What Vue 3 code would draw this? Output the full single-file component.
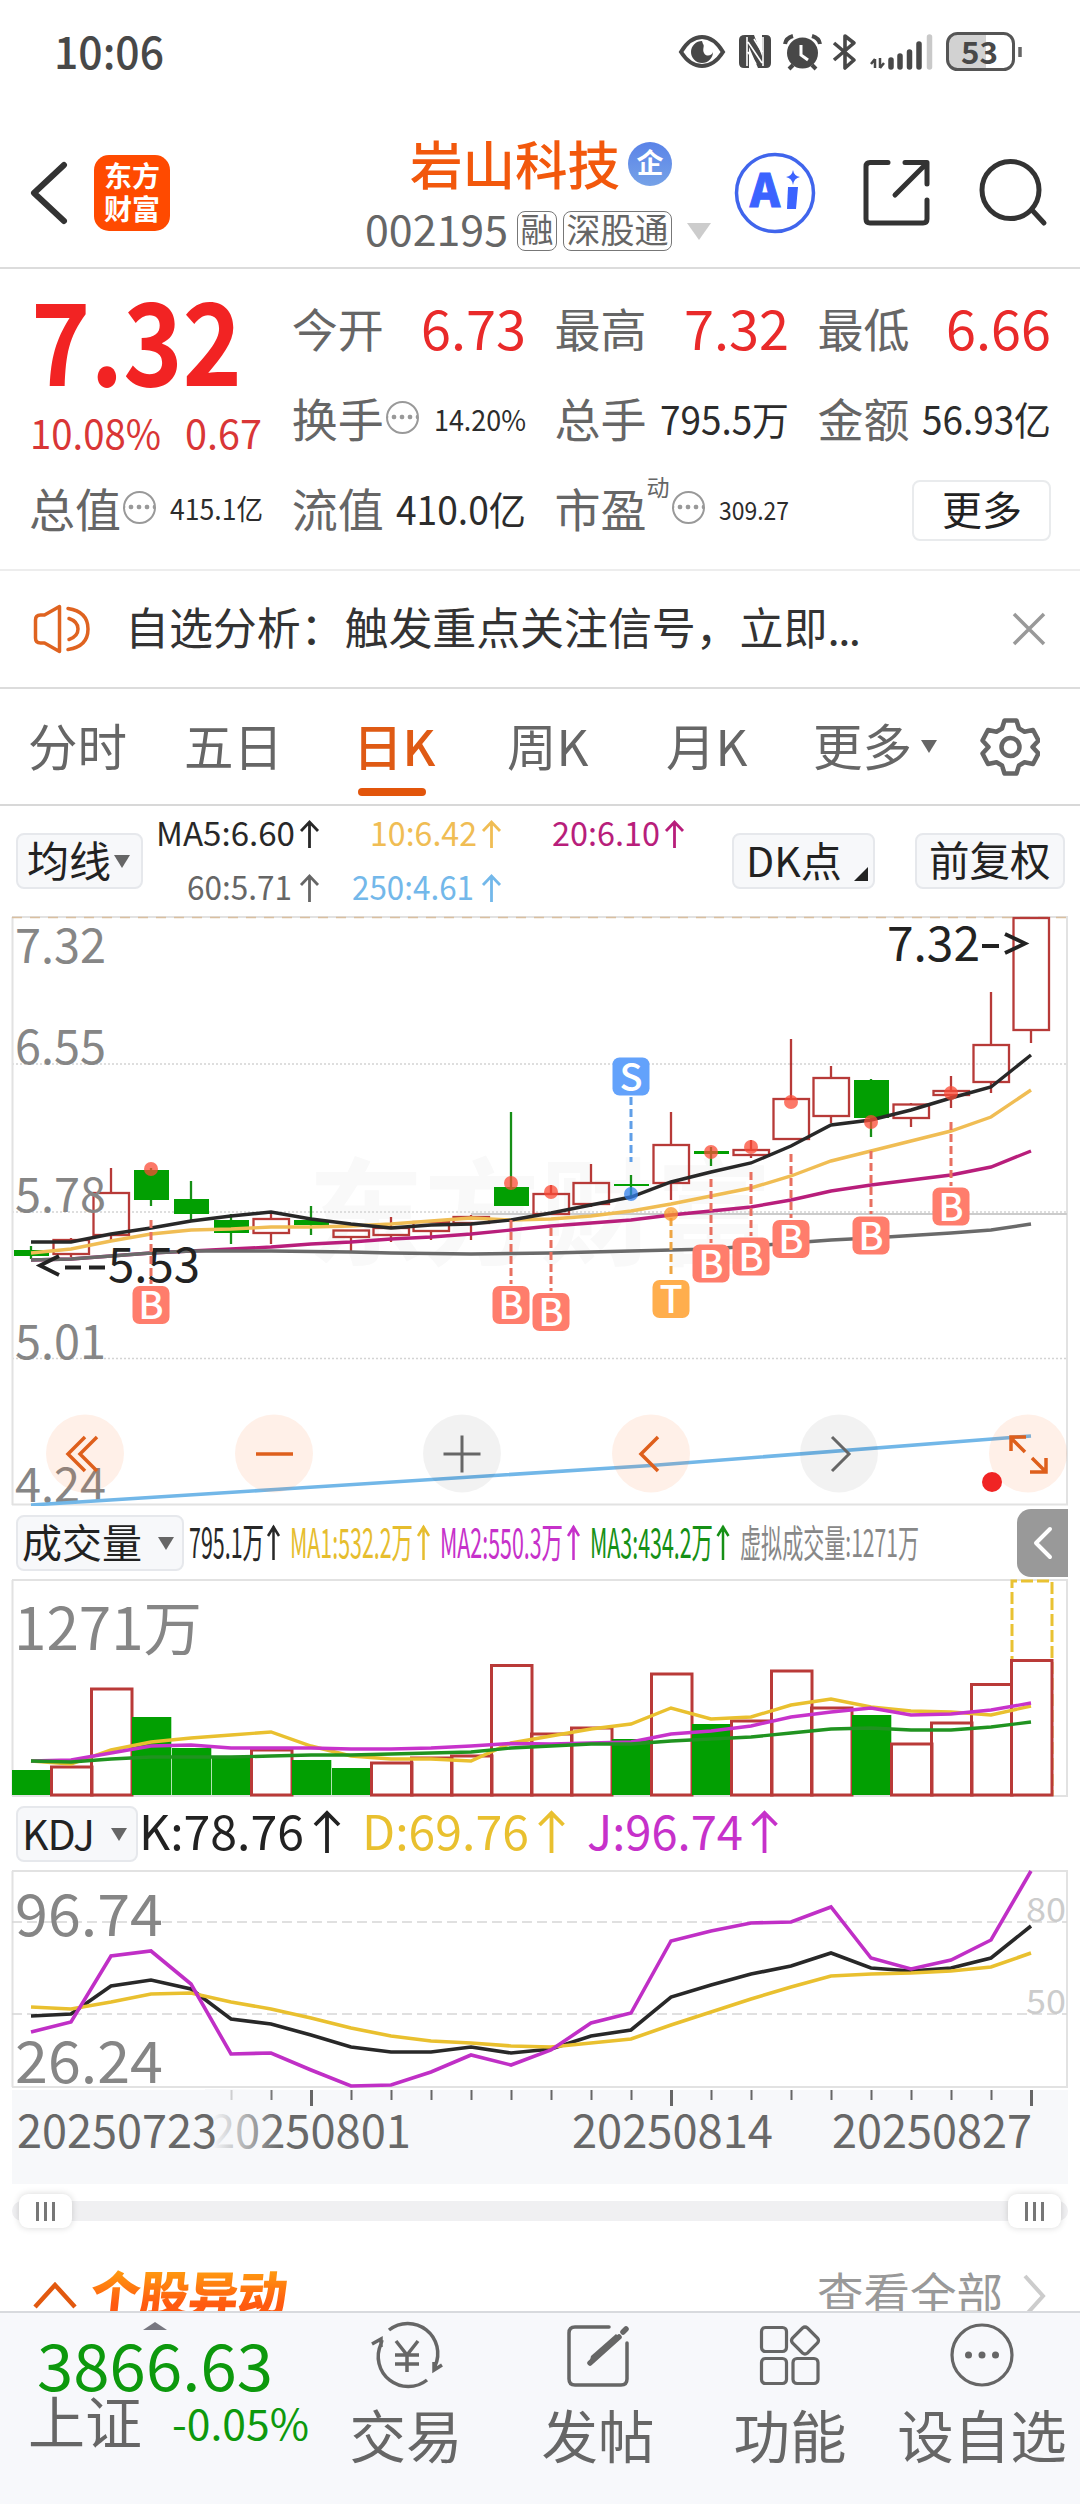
<script setup>
import { h } from 'vue'

// Single line of text set to an exact advance width, centred on its cap height
const Fit = ({ t, w, s }) =>
  h('svg', { width: w, height: s, style: { display: 'block', overflow: 'visible', flex: 'none' } }, [
    h('text', { x: 0, y: s * 0.8665, 'font-size': s, textLength: w, lengthAdjust: 'spacingAndGlyphs', fill: 'currentColor' }, t),
  ])
Fit.props = ['t', 'w', 's']

const px = (i) => 31 + 40 * i
const line = (ys) => ys.map((y, i) => `${px(i)},${y}`).join(' ')

// [rising, body top, body bottom, wick top, wick bottom]
const candles = [
  [0, 1250, 1256, 1246, 1259], [1, 1240, 1254, 1238, 1257], [1, 1193, 1235, 1168, 1240],
  [0, 1170, 1200, 1168, 1206], [0, 1199, 1214, 1181, 1222], [0, 1220, 1233, 1214, 1244],
  [1, 1219, 1233, 1213, 1244], [0, 1220, 1225, 1206, 1235], [1, 1230.5, 1237, 1230, 1251],
  [1, 1228, 1235, 1217, 1242], [1, 1222, 1231, 1221, 1240], [1, 1217, 1223, 1215, 1240],
  [0, 1187, 1206, 1112, 1206], [1, 1194, 1214, 1185, 1215], [1, 1183, 1204, 1164, 1207],
  [0, 1184, 1186, 1175, 1198], [1, 1145, 1183, 1112, 1200], [0, 1151, 1154, 1147, 1166],
  [1, 1150, 1155, 1140, 1158], [1, 1099, 1139, 1039, 1140], [1, 1078, 1116, 1066, 1123],
  [0, 1080, 1118, 1079, 1137], [1, 1104.5, 1118, 1103, 1127], [1, 1091, 1095, 1076, 1108],
  [1, 1045, 1082, 992, 1093], [1, 918, 1030, 918, 1043],
]
const averages = [
  { c: '#f0bd54', ys: [1253, 1249, 1241, 1234, 1230, 1229, 1227, 1227, 1226, 1224, 1221, 1218, 1220, 1219, 1216, 1211, 1204, 1196, 1188, 1176, 1161, 1151, 1141, 1131, 1117, 1090] },
  { c: '#b81e7b', ys: [1260, 1259, 1256, 1253, 1251, 1249, 1247, 1244, 1242, 1239, 1237, 1234, 1230, 1226, 1223, 1220, 1215, 1211, 1207, 1200, 1191, 1185, 1180, 1175, 1167, 1151] },
  { c: '#6a6a6a', ys: [1260, 1259, 1256, 1253, 1251, 1251, 1251, 1251.5, 1252, 1253, 1253.5, 1254, 1253.5, 1253, 1252, 1251, 1250, 1249, 1246, 1243, 1240, 1238, 1235.5, 1233, 1230, 1224] },
  { c: '#282828', ys: [1242, 1242, 1234, 1228, 1221, 1216, 1212, 1219, 1224, 1228, 1225, 1224, 1220, 1213, 1205, 1197, 1182, 1172, 1163, 1146, 1125, 1120, 1110, 1098, 1087, 1055] },
]
// [index, letter, dot y, dash start, dash end, badge centre]
const signals = [
  [3, 'B', 1169, 1220, 1284, 1305], [12, 'B', 1183, 1220, 1284, 1305], [13, 'B', 1192, 1228, 1291, 1312],
  [15, 'S', 1194, 1097, 1162, 1076.5], [16, 'T', 1214, 1218, 1278, 1299], [17, 'B', 1152, 1179, 1243, 1263.5],
  [18, 'B', 1147, 1172, 1236, 1256.5], [19, 'B', 1102, 1154, 1218, 1239], [21, 'B', 1122, 1151, 1214, 1235.5],
  [23, 'B', 1093, 1122, 1186, 1206.5],
]
const badge = { B: '#ff7d6c', S: '#63a2fb', T: '#ffae4d' }
const dotFill = { B: '#fb4b36', S: '#2f7eea', T: '#fb9a28' }
const dash = { B: '#e87060', S: '#609fe8', T: '#eea644' }
const prices = [['7.32', 963], ['6.55', 1064], ['5.78', 1212], ['5.01', 1359], ['4.24', 1502]]

const volumes = [
  [0, 1770], [1, 1767], [1, 1689], [0, 1717], [0, 1748], [0, 1756], [1, 1750], [0, 1760], [0, 1768],
  [1, 1763], [1, 1758], [1, 1756], [1, 1665.5], [1, 1734], [1, 1728], [0, 1739], [1, 1674], [0, 1724],
  [1, 1721], [1, 1671], [1, 1708], [0, 1715], [1, 1744], [1, 1723], [1, 1684.5], [1, 1660.5],
]
const volumeLines = [
  { c: '#e9c02f', ys: [1761, 1764, 1750, 1742, 1738, 1735, 1732, 1746, 1756, 1759, 1759, 1761, 1743, 1736, 1729, 1724, 1708, 1719, 1717, 1705, 1699, 1707, 1711, 1712, 1715, 1706] },
  { c: '#c733cb', ys: [1761, 1760, 1753, 1746, 1745, 1748, 1748, 1748, 1749, 1749, 1748, 1746, 1743.5, 1744, 1743, 1742, 1734, 1731, 1726, 1717, 1712, 1708, 1715, 1714, 1710, 1703] },
  { c: '#209320', ys: [1761, 1762, 1759, 1757, 1757, 1757, 1756, 1755, 1755, 1754, 1753, 1752, 1748, 1746, 1744, 1744, 1741, 1739, 1737, 1733, 1729, 1728, 1730, 1730, 1727, 1722] },
]
const kdjLines = [
  { c: '#282828', ys: [2016, 2014, 1986, 1980, 1989, 2019, 2024, 2035, 2047, 2052, 2052, 2047, 2053, 2049, 2036, 2030, 1997, 1985, 1974, 1966, 1953, 1968, 1971, 1968, 1958, 1926] },
  { c: '#e9c02f', ys: [2007, 2009, 2002, 1994, 1993, 2002, 2009, 2018, 2028, 2036, 2041, 2043, 2046, 2047, 2043, 2039, 2025, 2012, 1999, 1987, 1976, 1974, 1973, 1971, 1967, 1953] },
  { c: '#c02fc6', ys: [2032, 2022, 1956, 1951, 1984, 2054, 2053, 2070, 2086, 2085, 2072, 2055, 2065, 2050, 2023, 2013, 1941, 1931, 1923, 1922, 1907, 1958, 1969, 1960, 1940, 1871] },
]
const ticks = Array.from({ length: 21 }, (_, i) => i + 5)
</script>

<template>
  <main class="app">
    <div class="status">
      <Fit class="clock" t="10:06" :w="110" :s="45" />
      <svg class="status-icons" width="350" height="44" viewBox="676 30 350 44">
        <path d="M681 52Q690 37 702 37T723 52Q714 66 702 66T681 52Z" fill="none" stroke="#484848" stroke-width="4" />
        <path d="M702 41a11 11 0 1 0 11 11c-1 4-7 5-9 1s1-7-1-9z" fill="#484848" />
        <path d="M745 35h9l8 21V35h4q5 0 5 5v23q0 5-5 5h-8l-9-21v21h-5q-5 0-5-5V40q0-5 6-5z" fill="#484848" />
        <path d="M747 37v29M763 37v29M748 42l14 21M748 52l8 12M754 39l8 13" stroke="#fff" stroke-width="1.6" />
        <circle cx="802.500" cy="53" r="15.500" fill="#484848" />
        <path d="M785 44q1-6 8-8M812 36q7 2 8 8M793 65l-4 4M812 65l4 4" stroke="#484848" stroke-width="4" fill="none" />
        <path d="M801 45v10l7 5" stroke="#fff" stroke-width="3" fill="none" />
        <path d="M834 43l20 17-9 8V36l9 7-20 17" fill="none" stroke="#484848" stroke-width="3.600" stroke-linejoin="round" />
        <path d="M875 59v9M875 59l-4 5M880 58v10M880 68l4-5" fill="none" stroke="#484848" stroke-width="2.500" />
        <path d="M891 60v7M900 56v11M909.500 52v15M919 44v23" stroke="#484848" stroke-width="5.500" stroke-linecap="round" />
        <path d="M929.500 37v30" stroke="#c9c9c9" stroke-width="5.500" stroke-linecap="round" />
        <path d="M955 34h31v34h-31q-7 0-7-8V42q0-8 7-8z" fill="#d2d2d2" />
        <rect x="947.500" y="33.500" width="66" height="36" rx="10" fill="none" stroke="#555" stroke-width="3" />
        <path d="M1020 47v10" stroke="#666" stroke-width="3.500" />
        <text x="961" y="63.500" font-size="31" font-weight="700" fill="#484848" textLength="37" lengthAdjust="spacingAndGlyphs">53</text>
      </svg>
    </div>

    <header class="header">
      <svg class="back" width="40" height="64" viewBox="29 161 40 64"><path d="M64 165L34 193l30 28" fill="none" stroke="#333" stroke-width="6" stroke-linecap="round" stroke-linejoin="round" /></svg>
      <div class="logo"><span>东方</span><span>财富</span></div>
      <div class="title">
        <div class="name">岩山科技<i>企</i></div>
        <div class="code">
          <Fit t="002195" :w="143" :s="42" />
          <span class="tag">融</span><span class="tag wide">深股通</span>
          <i class="tri pale"></i>
        </div>
      </div>
      <svg class="actions" width="320" height="90" viewBox="734 148 320 90">
        <circle cx="775" cy="193" r="38.500" fill="#fff" stroke="#4065ec" stroke-width="3.500" />
        <text x="750" y="207" font-size="45" font-weight="900" fill="#3b63ff" stroke="#3b63ff" stroke-width="1" textLength="30" lengthAdjust="spacingAndGlyphs">A</text>
        <path d="M788 187h10l-2 22h-9z" fill="#3b63ff" /><path d="M793 170q1 6 7 7-6 1-7 8-1-7-7-8 6-1 7-7z" fill="#3b63ff" />
        <g fill="none" stroke="#333" stroke-width="5" stroke-linecap="round" stroke-linejoin="round">
          <path d="M888 162.500h-18q-4 0-4 4V219q0 4 4 4h53q4 0 4-4v-19M905 162.500h22V184M926 164l-31 31" />
          <circle cx="1010.500" cy="190" r="28.500" /><path d="M1032 210l12 13" />
        </g>
      </svg>
    </header>

    <section class="quote">
      <div class="last">
        <Fit class="price" t="7.32" :w="211" :s="114" />
        <div class="change"><Fit t="10.08%" :w="131" :s="40" /><Fit t="0.67" :w="77" :s="40" /></div>
      </div>
      <div class="cell"><span>今开</span><Fit class="red" t="6.73" :w="105" :s="54" /></div>
      <div class="cell"><span>最高</span><Fit class="red" t="7.32" :w="105" :s="54" /></div>
      <div class="cell"><span>最低</span><Fit class="red" t="6.66" :w="105" :s="54" /></div>
      <div class="cell"><span>换手</span><b class="more-info"></b><Fit t="14.20%" :w="92" :s="29" /></div>
      <div class="cell"><span>总手</span><Fit t="795.5万" :w="129" :s="39" /></div>
      <div class="cell"><span>金额</span><Fit t="56.93亿" :w="129" :s="39" /></div>
      <div class="cell"><span>总值</span><b class="more-info"></b><Fit t="415.1亿" :w="93" :s="28" /></div>
      <div class="cell"><span>流值</span><Fit t="410.0亿" :w="130" :s="39" /></div>
      <div class="cell"><span>市盈</span><sup>动</sup><b class="more-info"></b><Fit t="309.27" :w="70" :s="25" /></div>
      <div class="cell end"><button class="btn-more">更多</button></div>
    </section>

    <section class="notice">
      <svg width="60" height="50" viewBox="32 604 60 50" fill="none" stroke="#df6320" stroke-width="3.500" stroke-linejoin="round">
        <path d="M35.500 620q0-5 5-5h4l15-8.500v45l-15-8.500h-4q-5 0-5-5z" /><path d="M68 608.500q20 3 20 20.500t-20 20.500M69 618.500q9 3 9 10.500t-9 10.500" stroke-linecap="round" />
      </svg>
      <p>自选分析：触发重点关注信号，立即<i>...</i></p>
      <svg width="36" height="36" viewBox="0 0 36 36"><path d="M3 3l30 30M33 3L3 33" stroke="#999" stroke-width="3.500" /></svg>
    </section>

    <nav class="tabs">
      <span>分时</span><span>五日</span><span class="on">日K</span><span>周K</span><span>月K</span>
      <span>更多<i class="tri"></i></span>
      <svg width="60" height="60" viewBox="980 717 60 60" fill="none" stroke="#666" stroke-width="4.500" stroke-linejoin="round">
        <path d="M1004.500 720.500h12l2.500 8 5.500 3.200 8.500-1.700 5.500 10.500-6 6.500 6 6.500-5.500 10.500-8.500-1.700-5.500 3.200-2.500 8h-12l-2.500-8-5.500-3.200-8.500 1.700-5.500-10.500 6-6.500-6-6.500 5.500-10.500 8.500 1.700 5.500-3.200z" />
        <circle cx="1010.500" cy="747" r="9" />
      </svg>
    </nav>

    <section class="ma-bar">
      <button class="chip avg">均线<i class="tri"></i></button>
      <svg class="ma-text" width="540" height="110" viewBox="150 806 540 110" font-size="33">
        <text x="156" y="846" textLength="139" lengthAdjust="spacingAndGlyphs" fill="#282828">MA5:6.60</text>
        <text x="370" y="846" textLength="107" lengthAdjust="spacingAndGlyphs" fill="#f0bd54">10:6.42</text>
        <text x="552" y="846" textLength="108" lengthAdjust="spacingAndGlyphs" fill="#b81e7b">20:6.10</text>
        <text x="187" y="900" textLength="105" lengthAdjust="spacingAndGlyphs" fill="#666">60:5.71</text>
        <text x="352" y="900" textLength="122" lengthAdjust="spacingAndGlyphs" fill="#73b8ea">250:4.61</text>
        <g fill="none" stroke-width="2.800">
          <path d="M309.500 848v-26M301 831l8.500-9 8.500 9" stroke="#282828" />
          <path d="M491.500 848v-26M483 831l8.500-9 8.500 9" stroke="#f0bd54" />
          <path d="M674.500 848v-26M666 831l8.500-9 8.500 9" stroke="#b81e7b" />
          <path d="M309.500 902v-26M301 885l8.500-9 8.500 9" stroke="#666" />
          <path d="M491.500 902v-26M483 885l8.500-9 8.500 9" stroke="#73b8ea" />
        </g>
      </svg>
      <button class="chip dk">DK点<i></i></button>
      <button class="chip fq">前复权</button>
    </section>

    <svg class="chart" width="1080" height="590" viewBox="0 916 1080 590">
      <text x="308" y="1256" font-size="116" font-weight="700" fill="#f9f9f9" textLength="464">东方财富</text>
      <g stroke="#d4d4d4" stroke-width="1.500" stroke-dasharray="2 2"><path d="M12 1064H1067M12 1212H1067M12 1358.500H1067" /></g>
      <path d="M12.500 917V1505M1067 917V1505M12 1504.500H1068M12 917H1068" fill="none" stroke="#e2e2e2" stroke-width="2" />
      <path d="M12 917.500H1067" stroke="#d9bfa0" stroke-width="1.500" stroke-dasharray="10 8" />
      <path d="M471 1214H1067" stroke="#ccc" stroke-width="2" />
      <g v-for="(c, i) in candles" :key="i" :stroke="c[0] ? '#b73a38' : '#168f16'" stroke-width="2.300">
        <path :d="`M${px(i)} ${c[3]}V${c[1]}M${px(i)} ${c[2]}V${c[4]}`" />
        <rect v-if="c[0]" :x="px(i) - 17.500" :y="c[1]" width="35.500" :height="c[2] - c[1]" fill="none" />
        <rect v-else :x="px(i) - 17" :y="c[1]" width="35" :height="c[2] - c[1]" fill="#029f02" stroke="none" />
      </g>
      <g fill="#868686" font-size="47.500"><text v-for="p in prices" :key="p[0]" x="15" :y="p[1]" textLength="91" lengthAdjust="spacingAndGlyphs">{{ p[0] }}</text></g>
      <polyline points="31,1505 275,1489.500 651,1465.500 1031,1436" fill="none" stroke="#72b7e8" stroke-width="3.600" />
      <polyline v-for="a in averages" :key="a.c" :points="line(a.ys)" fill="none" :stroke="a.c" stroke-width="3.400" />
      <g fill="#222" font-size="48">
        <text x="887" y="961" textLength="93" lengthAdjust="spacingAndGlyphs">7.32</text>
        <path d="M982 946h17M1005 934l20 9.500-20 9.500" fill="none" stroke="#222" stroke-width="3.800" />
        <path d="M59 1256l-19 9.500 19 9.500M65 1267.500h16M89 1267.500h16" fill="none" stroke="#222" stroke-width="3.800" />
        <text x="108" y="1282" textLength="92" lengthAdjust="spacingAndGlyphs">5.53</text>
      </g>
      <g v-for="s in signals" :key="s[0]">
        <path :d="`M${px(s[0])} ${s[3]}V${s[4]}`" :stroke="dash[s[1]]" stroke-width="3" stroke-dasharray="8 4" />
        <circle :cx="px(s[0])" :cy="s[2]" r="7" :fill="dotFill[s[1]]" opacity=".75" />
        <rect :x="px(s[0]) - 18.500" :y="s[5] - 19" width="37" height="38" rx="7" :fill="badge[s[1]]" />
        <text :x="px(s[0])" :y="s[5] + 14" text-anchor="middle" font-size="38" font-weight="500" fill="#fff">{{ s[1] }}</text>
      </g>
      <g>
        <circle v-for="x in [85, 274, 651, 1028]" :key="x" :cx="x" cy="1453.500" r="39" fill="#ff6a1a" fill-opacity=".1" />
        <circle v-for="x in [462, 839]" :key="x" :cx="x" cy="1453.500" r="39" fill="#000" fill-opacity=".05" />
      </g>
      <g fill="none" stroke="#de5f1c" stroke-width="3.500">
        <path d="M85 1437l-17 17 17 17M97 1437l-17 17 17 17M256 1454h37M658 1437l-17 17 17 17" />
        <path d="M1025 1452l-14-14M1011 1451v-14h15M1032 1458l14 14M1046 1458v14h-16" />
      </g>
      <path d="M443.500 1454h37M462 1435.500v37M832 1437l17 17-17 17" fill="none" stroke="#666" stroke-width="3" />
      <circle cx="992" cy="1482" r="10" fill="#f02424" />
    </svg>

    <section class="vol-bar">
      <button class="chip vol">成交量<i class="tri"></i></button>
      <svg width="740" height="73" viewBox="187 1506 740 73" font-size="41">
        <text x="189" y="1558" textLength="75" lengthAdjust="spacingAndGlyphs" fill="#282828">795.1万</text>
        <text x="290" y="1558" textLength="123" lengthAdjust="spacingAndGlyphs" fill="#e6bd2e">MA1:532.2万</text>
        <text x="440" y="1558" textLength="123" lengthAdjust="spacingAndGlyphs" fill="#c631ca">MA2:550.3万</text>
        <text x="590" y="1558" textLength="123" lengthAdjust="spacingAndGlyphs" fill="#169016">MA3:434.2万</text>
        <text x="740" y="1557" font-size="38" textLength="179" lengthAdjust="spacingAndGlyphs" fill="#888">虚拟成交量:1271万</text>
        <g fill="none" stroke-width="2.500">
          <path d="M273.500 1560v-34M268 1536l5.500-9 5.500 9" stroke="#282828" />
          <path d="M423.500 1560v-34M418 1536l5.500-9 5.500 9" stroke="#e6bd2e" />
          <path d="M573.500 1560v-34M568 1536l5.500-9 5.500 9" stroke="#c631ca" />
          <path d="M723 1560v-34M717.500 1536l5.500-9 5.500 9" stroke="#169016" />
        </g>
      </svg>
      <div class="drawer"><svg width="20" height="34" viewBox="0 0 20 34"><path d="M17 3L3 17l14 14" fill="none" stroke="#fff" stroke-width="4" stroke-linecap="round" stroke-linejoin="round" /></svg></div>
    </section>

    <svg class="chart" width="1080" height="218" viewBox="0 1579 1080 218">
      <path d="M12.500 1580V1796M1067 1580V1796M12 1580H1068M12 1796H1068" stroke="#e2e2e2" stroke-width="2" />
      <path d="M1012 1796V1581H1052V1796" fill="none" stroke="#e9c232" stroke-width="3" stroke-dasharray="12 4" />
      <g v-for="(v, i) in volumes" :key="i">
        <rect v-if="v[0]" :x="px(i) - 19.500" :y="v[1]" width="40.500" :height="1795 - v[1]" :fill="i === 25 ? '#fff' : 'none'" stroke="#b93a38" stroke-width="3" />
        <rect v-else :x="px(i) - 19" :y="v[1]" width="39.300" :height="1795 - v[1]" fill="#029f02" />
      </g>
      <polyline v-for="l in volumeLines" :key="l.c" :points="line(l.ys)" fill="none" :stroke="l.c" stroke-width="3.400" />
      <text x="14" y="1650" font-size="58" fill="#868686" textLength="188" lengthAdjust="spacingAndGlyphs">1271万</text>
    </svg>

    <section class="kdj-bar">
      <button class="chip kdj">KDJ<i class="tri"></i></button>
      <svg width="660" height="73" viewBox="139 1797 660 73" font-size="48">
        <text x="139" y="1850" textLength="165" lengthAdjust="spacingAndGlyphs" fill="#222">K:78.76</text>
        <text x="362" y="1850" textLength="167" lengthAdjust="spacingAndGlyphs" fill="#e9c02f">D:69.76</text>
        <text x="587" y="1850" textLength="156" lengthAdjust="spacingAndGlyphs" fill="#c631ca">J:96.74</text>
        <g fill="none" stroke-width="3.800">
          <path d="M327 1853v-39M315 1825l12-12 12 12" stroke="#222" />
          <path d="M551.500 1853v-39M539.500 1825l12-12 12 12" stroke="#e9c02f" />
          <path d="M764.500 1853v-39M752.500 1825l12-12 12 12" stroke="#c631ca" />
        </g>
      </svg>
    </section>

    <svg class="chart" width="1080" height="218" viewBox="0 1870 1080 218">
      <path d="M12.500 1871V2087M1067 1871V2087M12 1871H1068M12 2087H1068" stroke="#e2e2e2" stroke-width="2" />
      <path d="M12 1922H1067M12 2014H1067" stroke="#d6d6d6" stroke-width="1.500" stroke-dasharray="10 5" />
      <g fill="#868686" font-size="58">
        <text x="15" y="1936" textLength="148" lengthAdjust="spacingAndGlyphs">96.74</text>
        <text x="15" y="2083" textLength="148" lengthAdjust="spacingAndGlyphs">26.24</text>
      </g>
      <g fill="#ccc" font-size="34">
        <text x="1026" y="1921.500" textLength="40" lengthAdjust="spacingAndGlyphs">80</text>
        <text x="1026" y="2013.500" textLength="40" lengthAdjust="spacingAndGlyphs">50</text>
      </g>
      <polyline v-for="l in kdjLines" :key="l.c" :points="line(l.ys)" fill="none" :stroke="l.c" stroke-width="3.600" />
    </svg>

    <svg class="chart" width="1080" height="96" viewBox="0 2088 1080 96">
      <defs><linearGradient id="fade"><stop offset="0.1" stop-color="#f7f8fa" /><stop offset="1" stop-color="#f7f8fa" stop-opacity="0" /></linearGradient></defs>
      <rect x="12" y="2090" width="1056" height="94" fill="#f7f8fa" />
      <path v-for="t in ticks" :key="t" :d="`M${px(t) + 0.5} 2090v${(t - 7) % 9 ? 10 : 16}`" stroke="#666" :stroke-width="(t - 7) % 9 ? 2 : 3" />
      <g fill="#686868" font-size="46">
        <text x="210" y="2147.500" textLength="201" lengthAdjust="spacingAndGlyphs">20250801</text>
        <rect x="205" y="2089" width="75" height="70" fill="url(#fade)" />
        <text x="17" y="2147.500" textLength="200" lengthAdjust="spacingAndGlyphs">20250723</text>
        <text x="572" y="2147.500" textLength="201" lengthAdjust="spacingAndGlyphs">20250814</text>
        <text x="832" y="2147.500" textLength="200" lengthAdjust="spacingAndGlyphs">20250827</text>
      </g>
    </svg>

    <div class="range"><div class="track"><b><i></i><i></i><i></i></b><b><i></i><i></i><i></i></b></div></div>

    <section class="moves">
      <svg width="46" height="30" viewBox="0 0 46 30"><path d="M3 27L23 5l20 22" fill="none" stroke="#e2590f" stroke-width="4.500" /></svg>
      <h2>个股异动</h2>
      <span>查看全部</span>
      <svg class="go" width="24" height="44" viewBox="0 0 24 44"><path d="M2 2l18 20L2 42" fill="none" stroke="#ccc" stroke-width="4" /></svg>
    </section>

    <footer class="dock">
      <div class="index">
        <i class="up"></i>
        <Fit class="points" t="3866.63" :w="236" :s="65" />
        <div><span>上证</span><Fit class="pct" t="-0.05%" :w="137" :s="42" /></div>
      </div>
      <div class="item">
        <svg width="80" height="70" viewBox="365 2320 80 70" fill="none" stroke="#666" stroke-width="3.500">
          <path d="M388 2330a30 30 0 0 1 46 36l-1 4M441 2365l-8 5v-8M426 2380a30 30 0 0 1-46-36l1-4M371 2344l9-5v8" />
          <path d="M395 2341l11 14 11-14M406 2355v17M394 2355h24M394 2364h24" />
        </svg>
        <span>交易</span>
      </div>
      <div class="item">
        <svg width="70" height="70" viewBox="564 2320 70 70" fill="none" stroke="#666" stroke-width="3.500" stroke-linecap="round">
          <path d="M610 2327h-34q-6 0-6 6v46q0 6 6 6h46q6 0 6-6v-36" />
          <path d="M590 2365l2-9 25-22 4 4-24 22z" fill="#666" stroke="none" /><path d="M591 2363l29-26M624 2332l3-3" stroke-width="5.500" />
        </svg>
        <span>发帖</span>
      </div>
      <div class="item">
        <svg width="70" height="70" viewBox="756 2320 70 70" fill="none" stroke="#666" stroke-width="3.200">
          <rect x="762.500" y="2327.500" width="25" height="24" rx="4" /><rect x="762.500" y="2358.500" width="25" height="25" rx="4" /><rect x="794" y="2358.500" width="25" height="25" rx="4" />
          <path d="M803.500 2328q2.500-2 5 0l10 10q2 2.500 0 5l-10 10q-2.500 2-5 0l-10-10q-2-2.500 0-5z" />
        </svg>
        <span>功能</span>
      </div>
      <div class="item">
        <svg width="70" height="70" viewBox="948 2320 70 70"><circle cx="983" cy="2355" r="30" fill="none" stroke="#666" stroke-width="3.200" /><g fill="#666"><circle cx="969.500" cy="2355" r="3.500" /><circle cx="983" cy="2355" r="3.500" /><circle cx="996.500" cy="2355" r="3.500" /></g></svg>
        <span>设自选</span>
      </div>
    </footer>
  </main>
</template>

<style>
body { margin: 0; background: #fff; }
</style>

<style scoped>
.app { width: 1080px; height: 2504px; overflow: hidden; display: flex; flex-direction: column; background: #fff; color: #333; font-family: "Noto Sans CJK SC", "Noto Sans", sans-serif; }
.app > * { flex: none; box-sizing: border-box; }
i { font-style: normal; }
button { box-sizing: border-box; font-family: inherit; color: #222; margin: 0; padding: 0; }
.chart { display: block; }
.tri { display: inline-block; width: 0; height: 0; border: 8.5px solid transparent; border-top: 13px solid #666; border-bottom: 0; }
.tri.pale { border-width: 17px 12px 0; border-top-color: #ccc; margin-left: 15px; }

.status { height: 100px; display: flex; align-items: flex-start; justify-content: space-between; padding: 30px 54px 0 54px; color: #484848; font-weight: 500; }
.clock { color: #484848; }

.header { height: 169px; border-bottom: 2px solid #dcdcdc; display: flex; padding-left: 29px; }
.back { margin-top: 61px; }
.logo { width: 76px; height: 76px; margin: 55px 0 0 25px; box-sizing: border-box; border-radius: 15px; background: #ff4a00; display: flex; flex-direction: column; align-items: center; justify-content: center; color: #fff; font-size: 28px; line-height: 33px; font-weight: 700; padding-bottom: 3px; }
.title { width: 345px; margin-left: 197px; display: flex; flex-direction: column; }
.name { display: flex; align-items: center; margin: 32px 0 0 43px; height: 60px; font-size: 52.5px; line-height: 60px; font-weight: 500; color: #f2580c; white-space: nowrap; }
.name i { width: 44px; height: 44px; margin: 3px 0 0 8px; border-radius: 50%; background: linear-gradient(#5a83e8, #76a2e7); color: #fff; font-size: 27px; line-height: 40px; text-align: center; font-weight: 700; }
.code { display: flex; align-items: center; height: 44px; margin-top: 17px; margin-left: -2px; color: #666; }
.tag { height: 40px; width: 40px; box-sizing: border-box; border: 1.5px solid #777; border-radius: 8px; font-size: 33px; line-height: 33px; text-align: center; margin-left: 9px; }
.tag.wide { width: 109px; margin-left: 6px; font-size: 34px; }
.actions { margin: 48px 0 0 22px; }

.quote { height: 302px; border-bottom: 2px solid #ededed; padding: 16px 0 0 29px; display: grid; grid-template-columns: repeat(4, 234px); grid-template-rows: repeat(3, 90px); column-gap: 28.8px; color: #2c2c2c; }
.last { grid-row: span 2; display: flex; flex-direction: column; color: #d93636; padding: 0 1px 0 2px; }
.price { color: #f22323; font-weight: 700; margin-top: 2px; }
.change { display: flex; justify-content: space-between; margin: 13px 0 0 -1px; }
.cell { display: flex; align-items: center; justify-content: space-between; }
.cell span { font-size: 46px; line-height: 60px; margin-top: -6px; color: #666; }
.cell .red { color: #e92a2a; }
.cell.end { justify-content: flex-end; }
.cell sup { font-size: 23px; line-height: 24px; color: #666; align-self: flex-start; margin: 9px 0 0 0; }
.more-info { width: 33px; height: 33px; box-sizing: border-box; border: 2.5px solid #999; border-radius: 50%; margin: 0 auto 6px 2px; background: radial-gradient(circle, #999 2px, transparent 2.7px) 2px 50% / 8px 8px repeat-x; }
.btn-more { width: 139px; height: 61px; border: 2px solid #e9ebed; border-radius: 8px; background: #fff; font-size: 40px; line-height: 50px; padding-bottom: 5px; }

.notice { height: 118px; border-bottom: 2px solid #dcdcdc; display: flex; align-items: center; padding: 0 33px 1px 32px; }
.notice p { margin: -5px 0 0 33px; font-size: 44px; letter-spacing: -.1px; flex: 1; white-space: nowrap; }
.notice p i { letter-spacing: -1.5px; }

.tabs { height: 117px; border-bottom: 2px solid #d8d8d8; display: grid; grid-template-columns: 156px 169px 154px 159px 147px 167px 60px; align-items: center; padding-left: 28px; font-size: 49.5px; color: #666; }
.tabs span { height: 115px; line-height: 110px; display: flex; align-items: center; padding-bottom: 4px; box-sizing: border-box; white-space: nowrap; }
.tabs .on { color: #df5a14; font-weight: 500; position: relative; }
.tabs .on::after { content: ""; position: absolute; left: 5px; bottom: 8px; width: 68px; height: 8px; border-radius: 4px; background: #e2550b; }
.tabs .tri { margin: 4px 0 0 9px; }

.chip { height: 56px; border: 2px solid #e6e8ec; border-radius: 8px; background: #f7f8fa; display: flex; align-items: center; font-size: 41px; line-height: 46px; padding-bottom: 5px; white-space: nowrap; }
.chip .tri { margin-top: 5px; }
.ma-bar { height: 110px; display: flex; padding-left: 16px; }
.ma-bar .chip { margin-top: 27px; }
.avg { width: 127px; padding-left: 9px; font-size: 42px; }
.avg .tri { margin-left: 3px; }
.ma-text { margin-left: 7px; }
.dk { width: 143px; margin-left: 42px; padding-left: 12px; position: relative; font-size: 41px; }
.dk i { position: absolute; right: 5px; bottom: 6px; border-left: 14px solid transparent; border-bottom: 14px solid #222; }
.fq { width: 150px; margin-left: 40px; padding-left: 12px; font-size: 40.5px; }
.vol-bar, .kdj-bar { height: 73px; display: flex; padding-left: 16px; }
.vol-bar .chip, .kdj-bar .chip { margin-top: 9px; }
.vol { width: 168px; padding-left: 4px; font-size: 40px; }
.vol .tri { margin-left: 16px; }
.vol-bar > svg { margin-left: 3px; }
.kdj { width: 122px; padding-left: 4px; font-size: 41px; letter-spacing: -1px; }
.kdj .tri { margin-left: 17px; }
.kdj-bar > svg { margin-left: 1px; }
.drawer { width: 51px; height: 68px; margin: 3px 0 0 90px; border-radius: 14px 0 0 14px; background: #999; display: flex; align-items: center; justify-content: center; }

.range { height: 56px; padding: 17px 12px 0; }
.track { height: 20px; border-radius: 10px; background: #f0f0f2; display: flex; align-items: center; justify-content: space-between; padding: 0 7px; }
.track b { width: 53px; height: 34px; border-radius: 9px; background: #fff; box-shadow: 0 0 7px rgba(0, 0, 0, .16); display: flex; align-items: center; justify-content: center; gap: 5.5px; }
.track i { width: 2.5px; height: 19px; background: #777; }

.moves { height: 71px; overflow: hidden; display: flex; align-items: flex-start; padding: 0 33px 0 32px; }
.moves > svg { margin-top: 40px; flex: none; }
.moves h2 { margin: 16px 0 0 11px; padding: 0 8px 0 2px; font-size: 50px; line-height: 70px; font-weight: 900; letter-spacing: -1px; transform: skewX(-6deg); background: linear-gradient(#ff9a10 15px, #ff5a10 48px); background-clip: text; color: transparent; flex: none; }
.moves span { margin: 20px 0 0 auto; font-size: 46.5px; line-height: 64px; color: #999; }
.moves .go { margin: 34px 0 0 20px; }

.dock { height: 193px; border-top: 2px solid #d8dade; background: #f7f8fb; display: flex; color: #666; }
.index { width: 310px; flex: none; color: #0d990d; }
.index .up { display: block; width: 0; border: 12px solid transparent; border-top: 0; border-bottom: 8px solid #777780; margin: 9px 0 0 143px; }
.points { margin: 5px 0 0 37px; }
.index > div { display: flex; align-items: center; margin-top: -16px; padding-left: 28px; }
.index span { font-size: 57px; line-height: 70px; color: #666; margin-right: 30px; flex: none; white-space: nowrap; }
.pct { margin-top: 12px; }
.item { width: 192px; flex: none; display: flex; flex-direction: column; align-items: center; }
.item > svg { margin-top: 7px; }
.item span { font-size: 56.5px; line-height: 76px; margin-top: 5px; white-space: nowrap; }
</style>
